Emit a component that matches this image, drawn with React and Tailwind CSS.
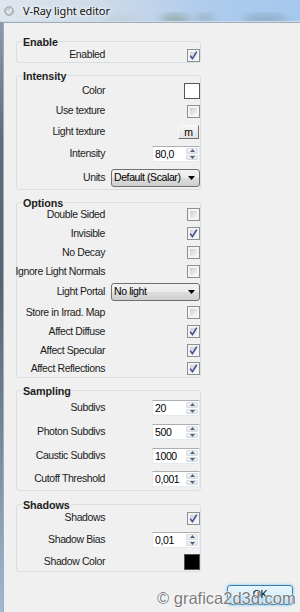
import React from 'react'

const font = "font-['Liberation_Sans','Arial',sans-serif]"

function Check({ checked }) {
	return (
		<div className="w-[13px] h-[13px] border border-[#8e8f8f] bg-[#f4f4f4] p-[2px]">
			<div className="w-full h-full flex items-center justify-center bg-[linear-gradient(135deg,#cbd0d6,#f6f6f6)]">
				{checked && (
					<svg width="9" height="9" viewBox="0 0 9 9" className="overflow-visible">
						<path d="M1.2 4.6 L3.4 7.6 L7.8 0.6" fill="none" stroke="#3a4a93" strokeWidth="1.5" />
					</svg>
				)}
			</div>
		</div>
	)
}

function Swatch({ color }) {
	return <div className={`w-[16px] h-[16px] border border-[#555] ${color}`} />
}

function Spinner({ value }) {
	return (
		<div className="w-[48px] h-[16px] flex bg-white border border-[#e3e9ef] border-t-[#abadb3]">
			<span className="flex-1 pl-[2px] leading-[14px] text-black">{value}</span>
			<div className="w-[13px] flex flex-col gap-px py-px pr-px">
				<div className="flex-1 flex items-center justify-center rounded-[1px] bg-[linear-gradient(#f4f4f4,#e3e6ea)] border border-[#d8dce2]">
					<svg width="5" height="3" viewBox="0 0 5 3"><path d="M0 3 L2.5 0 L5 3Z" fill="#4d6185" /></svg>
				</div>
				<div className="flex-1 flex items-center justify-center rounded-[1px] bg-[linear-gradient(#f4f4f4,#e3e6ea)] border border-[#d8dce2]">
					<svg width="5" height="3" viewBox="0 0 5 3"><path d="M0 0 L2.5 3 L5 0Z" fill="#4d6185" /></svg>
				</div>
			</div>
		</div>
	)
}

function Dropdown({ value }) {
	return (
		<div className="w-[89px] h-[18px] flex items-center pl-[2px] pr-[4px] rounded-[3px] border border-[#707070] bg-[linear-gradient(#f2f2f2_0%,#ebebeb_50%,#dddddd_50%,#cfcfcf_100%)]">
			<span className="flex-1 whitespace-nowrap text-black">{value}</span>
			<svg width="7" height="4" viewBox="0 0 7 4"><path d="M0 0 L7 0 L3.5 4Z" fill="#000" /></svg>
		</div>
	)
}

function Row({ label, h, children }) {
	return (
		<div className={`flex items-center ${h}`}>
			<div className="w-[88px] flex justify-end">
				<span className="whitespace-nowrap text-[#1b1b1b]">{label}</span>
			</div>
			<div className="flex-1 flex justify-end">{children}</div>
		</div>
	)
}

function Group({ title, className, children }) {
	return (
		<fieldset className={`w-[185px] ml-[12px] rounded-[3px] border border-[#d5dfe5] ${className}`}>
			<legend className="ml-[5px] px-[1px] leading-[0px] font-bold text-[10.8px] tracking-[-0.1px] text-[#1e1e1e]">{title}</legend>
			{children}
		</fieldset>
	)
}

function TitleBar() {
	return (
		<div className="relative h-[22px] flex items-center overflow-hidden">
			<svg className="absolute inset-0" width="300" height="22" viewBox="0 0 300 22">
				<defs>
					<linearGradient id="tb" x1="0" y1="0" x2="1" y2="0">
						<stop offset="0" stopColor="#dfe5ec" />
						<stop offset="0.4" stopColor="#c9d8e8" />
						<stop offset="0.7" stopColor="#aecbeb" />
						<stop offset="1" stopColor="#a6c8ee" />
					</linearGradient>
					<filter id="bl"><feGaussianBlur stdDeviation="4" /></filter>
				</defs>
				<rect width="300" height="22" fill="url(#tb)" />
				<g filter="url(#bl)" opacity="0.55">
					<ellipse cx="175" cy="20" rx="14" ry="6" fill="#7e8f7e" />
					<ellipse cx="205" cy="19" rx="10" ry="5" fill="#8aa0a6" />
					<ellipse cx="265" cy="20" rx="22" ry="6" fill="#7f95ab" />
					<ellipse cx="120" cy="21" rx="20" ry="4" fill="#b8c4cc" />
				</g>
				<rect y="21" width="300" height="1" fill="#c9dcef" />
			</svg>
			<svg className="relative ml-[4px]" width="10" height="10" viewBox="0 0 10 10">
				<circle cx="5" cy="5" r="4.3" fill="#c9ccd0" stroke="#8f959c" strokeWidth="0.9" />
				<path d="M2.8 5 L4.6 7 L7.6 3" fill="none" stroke="#f2f2f2" strokeWidth="1.3" />
			</svg>
			<span className="relative ml-[9px] text-[11px] tracking-[-0.1px] text-[#101010] font-['Noto_Sans',sans-serif] [text-shadow:0_0_6px_#fff,0_0_3px_#fff]">
				V-Ray light editor
			</span>
		</div>
	)
}

export default function App() {
	return (
		<div className={`relative w-[300px] h-[612px] flex flex-col overflow-hidden ${font} text-[10.5px] tracking-[-0.4px]`}>
			<TitleBar />
			<div className="flex-1 flex">
				<div className="w-[3px] bg-[linear-gradient(#8a9bb0,#5d6d7b_20%,#56646f_45%,#7a8fa3_75%,#9fbad6)]" />
				<div className="flex-1 flex flex-col bg-[#f0f0f0] border-l border-t border-[#a3acb6] pt-[18px]">
					<Group title="Enable">
						<div className="pt-[6px]">
							<Row label="Enabled" h="h-[14px]"><Check checked /></Row>
						</div>
					</Group>

					<Group title="Intensity" className="mt-[12px]">
						<div className="pt-[6px]">
							<Row label="Color" h="h-[18px]"><Swatch color="bg-white" /></Row>
							<Row label="Use texture" h="h-[22px]"><Check /></Row>
							<Row label="Light texture" h="h-[20px]">
								<div className="w-[21px] h-[14px] flex items-center justify-center text-black leading-none bg-[linear-gradient(#f6f6f6,#e2e2e2)] border border-[#f8f8f8] border-r-[#6f6f6f] border-b-[#6f6f6f] mr-px">
									m
								</div>
							</Row>
							<Row label="Intensity" h="h-[24px]"><Spinner value="80,0" /></Row>
							<Row label="Units" h="h-[23px]"><Dropdown value="Default (Scalar)" /></Row>
						</div>
					</Group>

					<Group title="Options" className="mt-[12px]">
						<div className="pt-[2px]">
							<Row label="Double Sided" h="h-[19px]"><Check /></Row>
							<Row label="Invisible" h="h-[19px]"><Check checked /></Row>
							<Row label="No Decay" h="h-[19px]"><Check /></Row>
							<Row label="Ignore Light Normals" h="h-[19px]"><Check /></Row>
							<Row label="Light Portal" h="h-[22px]"><Dropdown value="No light" /></Row>
							<Row label="Store in Irrad. Map" h="h-[19px]"><Check /></Row>
							<Row label="Affect Diffuse" h="h-[19px]"><Check checked /></Row>
							<Row label="Affect Specular" h="h-[19px]"><Check checked /></Row>
							<Row label="Affect Reflections" h="h-[17px]"><Check checked /></Row>
						</div>
					</Group>

					<Group title="Sampling" className="mt-[12px]">
						<div className="pt-[5px]">
							<Row label="Subdivs" h="h-[24px]"><Spinner value="20" /></Row>
							<Row label="Photon Subdivs" h="h-[24px]"><Spinner value="500" /></Row>
							<Row label="Caustic Subdivs" h="h-[24px]"><Spinner value="1000" /></Row>
							<Row label="Cutoff Threshold" h="h-[22px]"><Spinner value="0,001" /></Row>
						</div>
					</Group>

					<Group title="Shadows" className="mt-[13px]">
						<div className="pt-[4px]">
							<Row label="Shadows" h="h-[18px]"><Check checked /></Row>
							<Row label="Shadow Bias" h="h-[26px]"><Spinner value="0,01" /></Row>
							<Row label="Shadow Color" h="h-[18px]"><Swatch color="bg-black" /></Row>
						</div>
					</Group>

					<div className="mt-[13px] flex justify-end pr-[7px]">
						<div className="w-[66px] h-[20px] flex items-center justify-center rounded-[3px] border border-[#3c7fb1] bg-[linear-gradient(#eaf6fd_0%,#d9f0fc_50%,#bee6fd_50%,#a7d9f5_100%)] shadow-[0_0_3px_#6cc2ee] text-black">
							OK
						</div>
					</div>
				</div>
			</div>
			<div className="absolute left-[157px] top-[589px] text-[16.5px] leading-[18px] tracking-normal text-[#7b7b7b] font-['Liberation_Sans',sans-serif] [text-shadow:0_0_1px_#fff,0_0_2px_#fff,0_0_2px_#fff]">
				© grafica2d3d.com
			</div>
		</div>
	)
}
